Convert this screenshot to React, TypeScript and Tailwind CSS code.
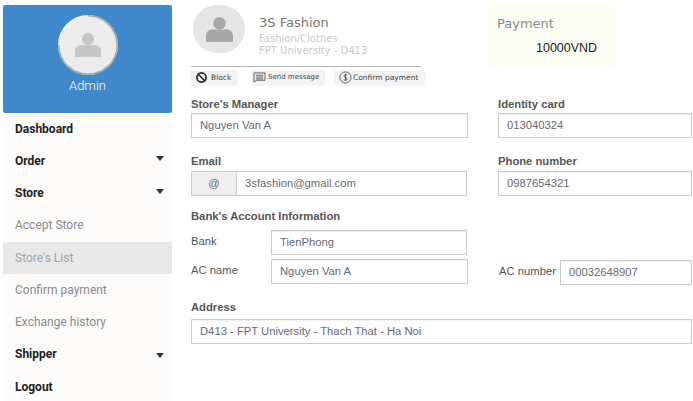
import { ReactNode } from "react";
import { Ban } from "lucide-react";

const Person = ({ className }: { className: string }) => (
  <svg viewBox="0 0 26 26" className={className} fill="currentColor">
    <circle cx="13" cy="7" r="6" />
    <path d="M0 24v-5c0-4 3-6 6-6h14c3 0 6 2 6 6v5c0 .6-.4 1-1 1H1c-.6 0-1-.4-1-1z" />
  </svg>
);

const MenuItem = ({
  label,
  bold,
  active,
  caret,
  caretLow,
}: {
  label: string;
  bold?: boolean;
  active?: boolean;
  caret?: boolean;
  caretLow?: boolean;
}) => (
  <div
    className={`h-[32.25px] flex items-center justify-between pl-[12px] pr-[8px] text-[12px] ${
      bold ? "font-bold text-[#222]" : "text-[#8a8a8a]"
    } ${active ? "bg-[#e8e8e8] text-[#a4a4a4]" : ""}`}
  >
    <span>{label}</span>
    {caret && (
      <span
        className={`w-0 h-0 border-x-[4px] border-x-transparent border-t-[5px] border-t-[#333] ${
          caretLow ? "mt-[3px]" : "-mt-[4px]"
        }`}
      />
    )}
  </div>
);

const Label = ({ children, className = "mb-[2px]" }: { children: ReactNode; className?: string }) => (
  <div className={`text-[11.25px] leading-[13px] font-bold text-[#555] ${className}`}>{children}</div>
);

const Field = ({ value, className }: { value: string; className: string }) => (
  <div
    className={`h-[25px] border border-[#ccc] bg-white flex items-center pl-[8px] text-[11.25px] text-[#666a75] shadow-[inset_0_1px_1px_rgba(0,0,0,0.06)] ${className}`}
  >
    {value}
  </div>
);

const ActionButton = ({ icon, label, className }: { icon: ReactNode; label: string; className: string }) => (
  <div
    className={`h-[16px] bg-[#f3f3f3] rounded-[2px] flex items-center font-['DejaVu_Sans',sans-serif] text-[#444] whitespace-nowrap ${className}`}
  >
    {icon}
    {label}
  </div>
);

export default function App() {
  return (
    <div className="w-[693px] h-[401px] overflow-hidden bg-white flex font-['Liberation_Sans',sans-serif]">
      {/* Sidebar */}
      <aside className="w-[169px] ml-[3px] mt-[5px] shrink-0 bg-[#fdfcfb] font-['Roboto',sans-serif]">
        <div className="h-[107.5px] bg-[#3f88cb] rounded-[2px] flex flex-col items-center pt-[10px]">
          <div className="relative w-[60px] h-[60px] rounded-full bg-[#ececec] flex items-center justify-center">
            <Person className="w-[26px] h-[26px] text-[#c6c6c6]" />
            <svg viewBox="0 0 60 60" className="absolute inset-0 w-[60px] h-[60px]" fill="none" stroke="#a8a8a8" strokeWidth="1.500">
              <path d="M30 .8A29.200 29.200 0 1 1 .8 30" />
            </svg>
          </div>
          <div className="text-[13px] leading-[16px] mt-[3px] text-white font-light">Admin</div>
        </div>
        <MenuItem label="Dashboard" bold />
        <MenuItem label="Order" bold caret />
        <MenuItem label="Store" bold caret />
        <MenuItem label="Accept Store" />
        <MenuItem label="Store's List" active />
        <MenuItem label="Confirm payment" />
        <MenuItem label="Exchange history" />
        <MenuItem label="Shipper" bold caret caretLow />
        <MenuItem label="Logout" bold />
      </aside>

      {/* Main */}
      <main className="ml-[19px] w-[501px] shrink-0">
        <div className="h-[98px] flex">
          <div className="w-[230px] pt-[5px]">
            <div className="flex pl-[2px] font-['DejaVu_Sans',sans-serif]">
              <div className="w-[52px] h-[48px] rounded-full bg-[#e6e6e6] flex items-center justify-center">
                <Person className="w-[27px] h-[27px] text-[#a8a8a8]" />
              </div>
              <div className="ml-[14px] pt-[9px]">
                <div className="text-[13px] leading-[17px] text-[#777]">3S Fashion</div>
                <div className="text-[10px] leading-[12.500px] text-[#c8c8c8] mt-[1.500px]">Fashion/Clothes</div>
                <div className="text-[10px] leading-[12.500px] text-[#c8c8c8]">FPT University - D413</div>
              </div>
            </div>
            <div className="h-px bg-[#b4b4b4] mt-[8px] mb-[3px]" />
            <div className="flex w-[234px]">
              <ActionButton
                className="w-[47px] pl-[5px] gap-[4px] text-[7.5px]"
                icon={<Ban className="w-[11px] h-[11px] text-[#222]" strokeWidth={3.5} />}
                label="Block"
              />
              <ActionButton
                className="w-[74px] ml-[13px] pl-[2px] gap-[2px] text-[7px]"
                icon={
                  <svg viewBox="0 0 14 12" className="w-[13px] h-[11px]" fill="none" stroke="#555" strokeWidth="1">
                    <path d="M1 1h12v8H4l-3 2z" />
                    <path d="M3 3.500h8M3 5.500h8M3 7.500h8" />
                  </svg>
                }
                label="Send message"
              />
              <ActionButton
                className="w-[91px] ml-[9px] pl-[5px] gap-[1px] text-[7.5px]"
                icon={
                  <svg viewBox="0 0 14 14" className="w-[13px] h-[13px]" fill="none" stroke="#555" strokeWidth="1">
                    <circle cx="7" cy="7" r="6" />
                    <path d="M9 4.800C8.500 4 6 3.600 5.300 5c-.7 2 3.600 1.700 3.500 3.800-.2 1.500-3 1.400-3.800.4M7 3v8" />
                  </svg>
                }
                label="Confirm payment"
              />
            </div>
          </div>
          <div className="ml-[66px] mt-[3px] w-[130px] h-[64px] bg-[#fcfef4] pl-[10px] pt-[13px] text-[#8a8a8a] font-['DejaVu_Sans',sans-serif]">
            <div className="text-[13px] leading-[16px]">Payment</div>
            <div className="text-[12.500px] leading-[16px] mt-[8px] ml-[39px] font-['Liberation_Sans',sans-serif] text-[#222]">
              10000VND
            </div>
          </div>
        </div>

        <div className="flex">
          <div className="w-[307px] shrink-0">
            <Label>Store's Manager</Label>
            <Field value="Nguyen Van A" className="w-[277px]" />
            <div className="mt-[17px]">
              <Label className="mb-[3px]">Email</Label>
              <div className="w-[276px] h-[25px] flex border border-[#ccc] text-[11.25px] text-[#666a75]">
                <div className="w-[45px] bg-[#eeeeee] border-r border-[#ccc] flex items-center justify-center">@</div>
                <div className="flex-1 flex items-center pl-[8px]">3sfashion@gmail.com</div>
              </div>
            </div>
            <Label className="mt-[14px]">Bank's Account Information</Label>
            <div className="flex items-start mt-[7px]">
              <div className="w-[80px] text-[11.25px] leading-[13px] text-[#555] pt-[5px]">Bank</div>
              <Field value="TienPhong" className="w-[196px]" />
            </div>
            <div className="flex items-start mt-[4px]">
              <div className="w-[80px] text-[11.25px] leading-[13px] text-[#555] pt-[5px]">AC name</div>
              <Field value="Nguyen Van A" className="w-[197px]" />
            </div>
          </div>
          <div className="flex-1">
            <Label>Identity card</Label>
            <Field value="013040324" className="w-[194px]" />
            <div className="mt-[17px]">
              <Label className="mb-[3px]">Phone number</Label>
              <Field value="0987654321" className="w-[194px]" />
            </div>
            <div className="flex items-start mt-[64px]">
              <div className="w-[62px] pl-[1px] text-[11.25px] leading-[13px] text-[#555] pt-[5px]">AC number</div>
              <Field value="00032648907" className="w-[132px]" />
            </div>
          </div>
        </div>

        <div className="mt-[16px]">
          <Label className="mb-[5px]">Address</Label>
          <Field value="D413 - FPT University - Thach That - Ha Noi" className="w-[501px]" />
        </div>
      </main>
    </div>
  );
}
